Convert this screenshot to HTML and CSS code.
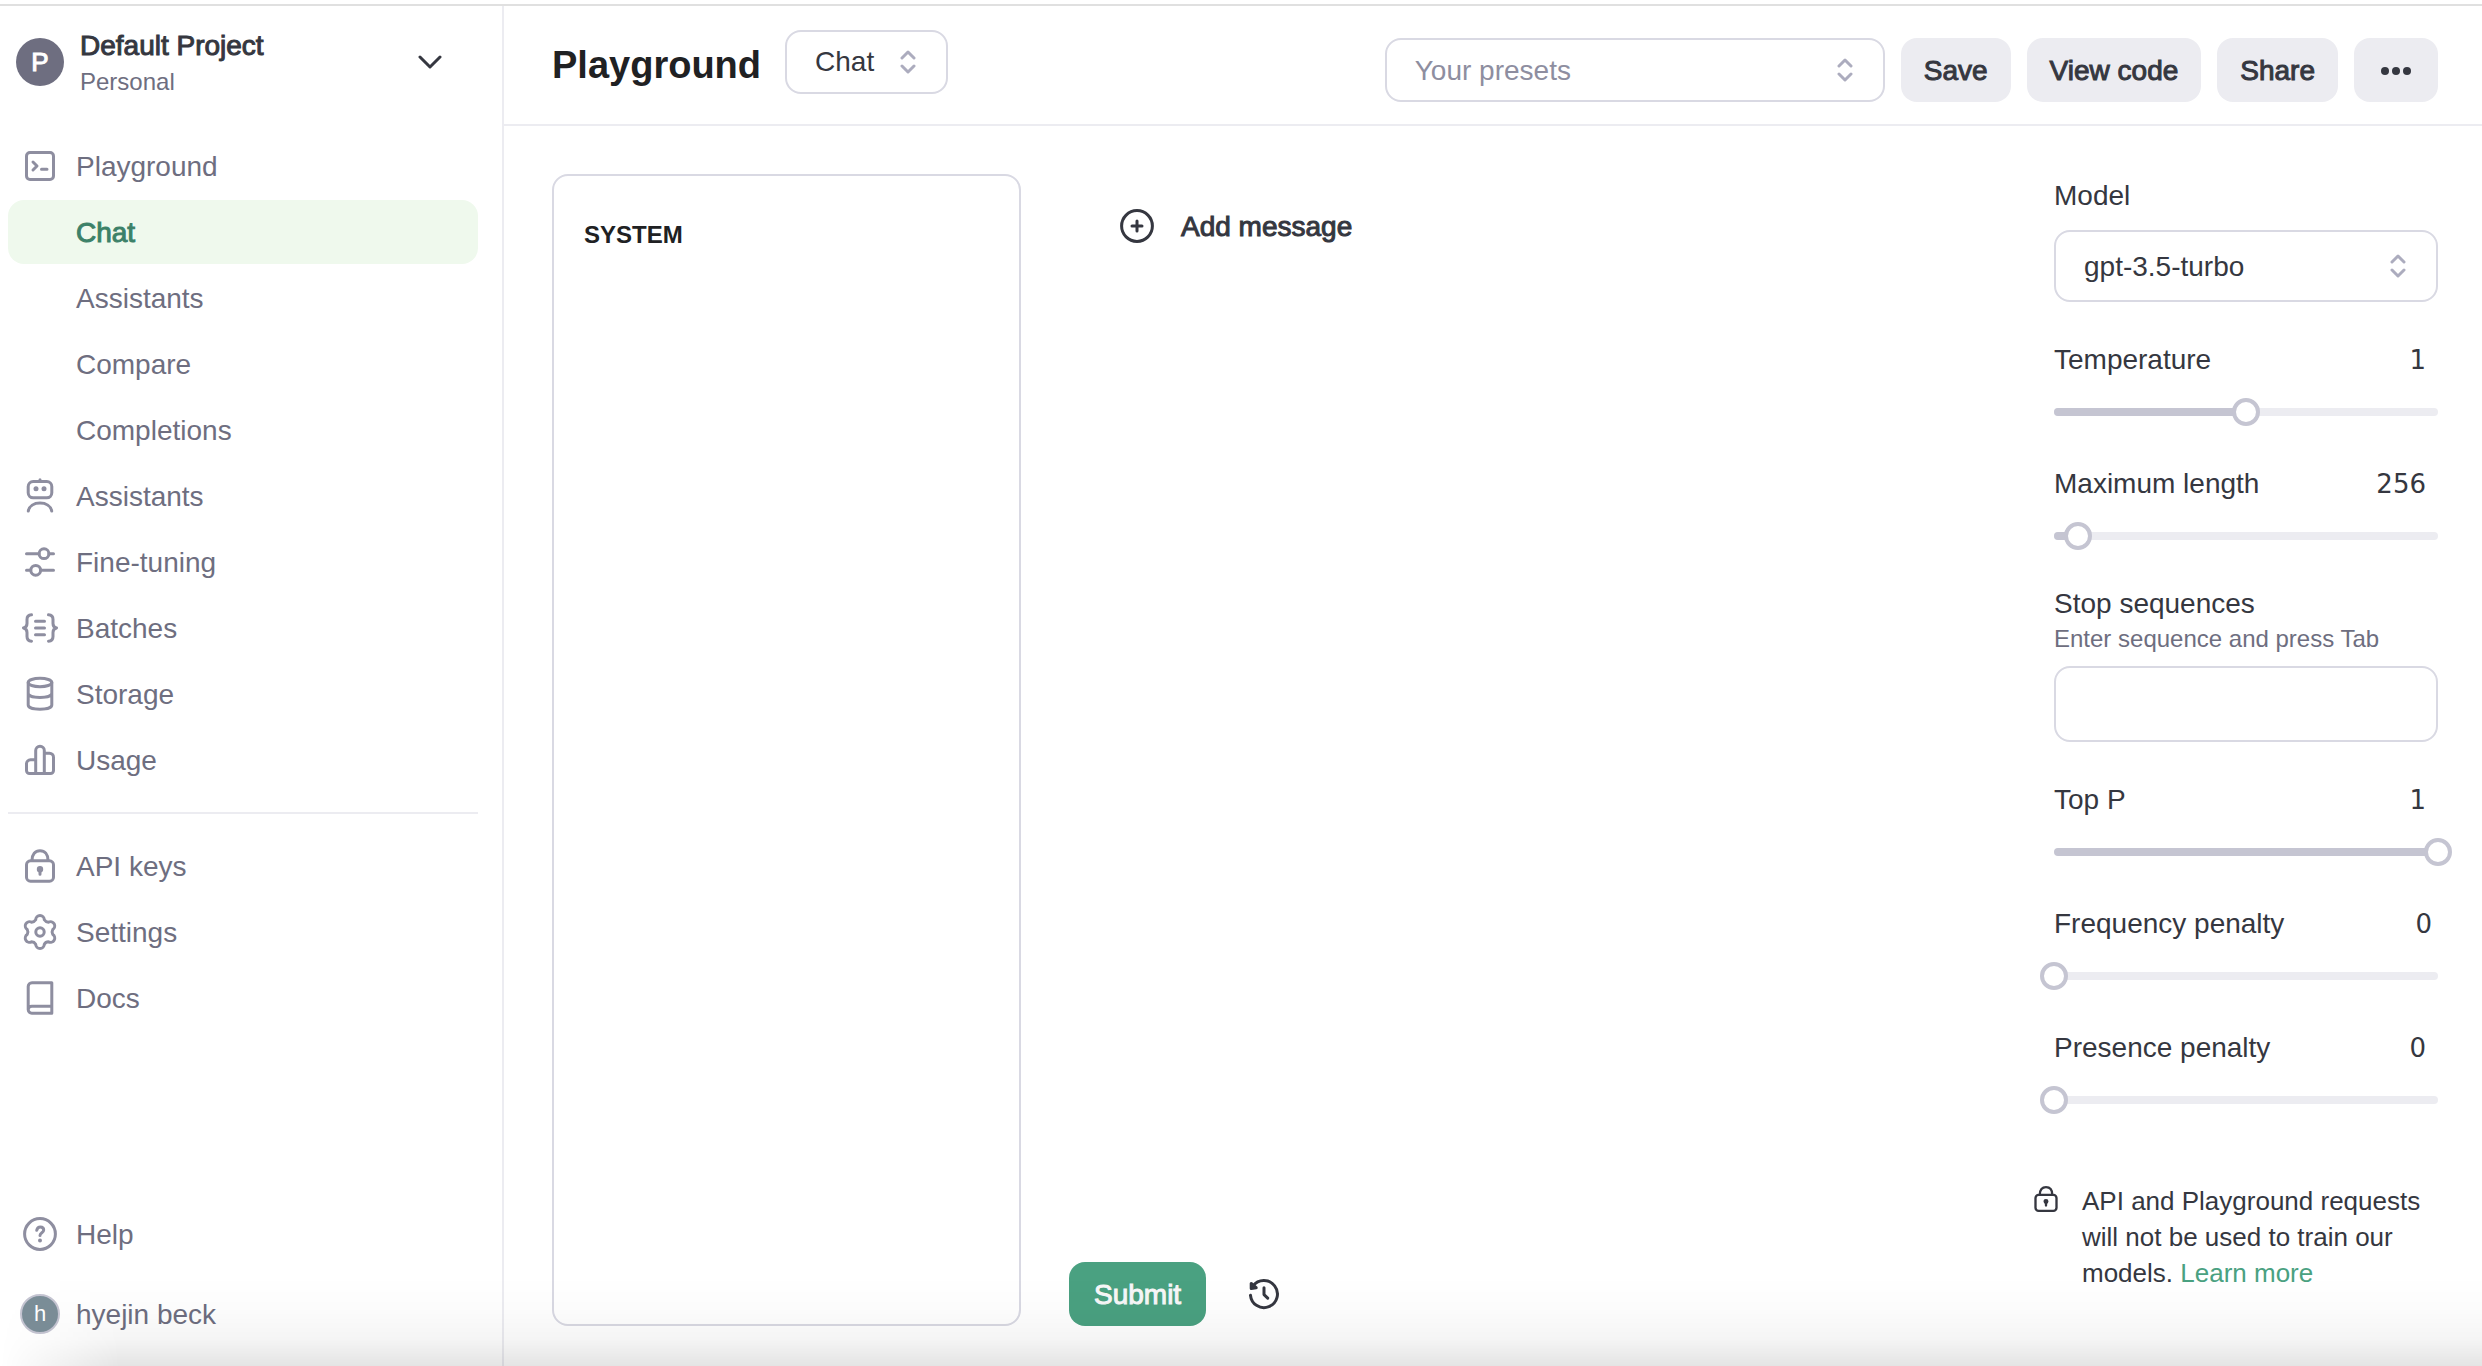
FILE: index.html
```html
<!DOCTYPE html>
<html lang="en">
<head>
<meta charset="utf-8">
<meta name="viewport" content="width=device-width, initial-scale=1">
<title>Playground</title>
<link rel="stylesheet" href="styles.css">
</head>
<body>
<svg class="defs" aria-hidden="true">
  <symbol id="lock" viewBox="0 0 36 36">
    <rect x="4.5" y="12.8" width="27" height="20.4" rx="4"/>
    <path d="M10 12.5C10 6.2 13.2 2.8 18 2.8s8 3.4 8 9.7M18 22v4.2"/>
    <circle cx="18" cy="21.3" r="1.7"/>
  </symbol>
  <symbol id="updown" viewBox="0 0 16 24">
    <path d="M2 8l6-6 6 6M2 16l6 6 6-6"/>
  </symbol>
</svg>
<div class="app">
  <aside class="sidebar">
    <button class="project" type="button">
      <span class="project-badge medium">P</span>
      <span class="project-text">
        <span class="project-name medium">Default Project</span>
        <span class="project-kind">Personal</span>
      </span>
      <svg class="project-chevron" viewBox="0 0 24 14"><path d="M2 2l10 10L22 2"/></svg>
    </button>
    <nav class="nav">
      <a class="nav-item" href="#"><svg class="icon" viewBox="0 0 36 36"><rect x="4.5" y="4.5" width="27" height="27" rx="3.5"/><path d="M11 14l4 4-4 4M19.5 21.3h5.5"/></svg>Playground</a>
      <a class="nav-item nav-sub active medium" href="#" aria-current="page">Chat</a>
      <a class="nav-item nav-sub" href="#">Assistants</a>
      <a class="nav-item nav-sub" href="#">Compare</a>
      <a class="nav-item nav-sub" href="#">Completions</a>
      <a class="nav-item" href="#"><svg class="icon" viewBox="0 0 36 36"><rect x="6.2" y="3.5" width="23.6" height="16.3" rx="5"/><path d="M18 3.5V1.8M6.3 33C7.2 28 12 25 18 25s10.8 3 11.7 8"/><circle class="dot" cx="14" cy="10.7" r="2.5"/><circle class="dot" cx="22" cy="10.7" r="2.5"/></svg>Assistants</a>
      <a class="nav-item" href="#"><svg class="icon" viewBox="0 0 36 36"><path d="M4.5 9.7H17M27 9.7h4.5M4.5 26.3H8.7M18.7 26.3h12.8"/><circle cx="22" cy="9.7" r="4.9"/><circle cx="13.7" cy="26.3" r="4.9"/></svg>Fine-tuning</a>
      <a class="nav-item" href="#"><svg class="icon" viewBox="0 0 36 36"><path d="M9.5 4.8C6.2 5 5 7 5 9.5v4C5 16 3.5 17.5 1.5 18 3.5 18.5 5 20 5 22.5v4c0 2.500 1.200 4.500 4.500 4.700M26.500 4.800C29.800 5 31 7 31 9.500v4c0 2.500 1.500 4 3.500 4.500-2 .5-3.500 2-3.500 4.500v4c0 2.500-1.200 4.500-4.500 4.700M13.500 11.300h9M13.500 18h9M13.500 24.700h9"/></svg>Batches</a>
      <a class="nav-item" href="#"><svg class="icon" viewBox="0 0 36 36"><ellipse cx="18" cy="6.5" rx="11.8" ry="4.2"/><path d="M6.2 6.5V29c0 2.6 5.3 4.2 11.8 4.2S29.8 31.6 29.8 29V6.5M6.2 17.3c0 2.6 5.3 4.2 11.8 4.2s11.8-1.6 11.8-4.2"/></svg>Storage</a>
      <a class="nav-item" href="#"><svg class="icon" viewBox="0 0 36 36"><path d="M13.7 31.5V8.5a4.3 4.3 0 0 1 8.6 0v23M13.7 17.8H8.5a4 4 0 0 0-4 4v6.7a3 3 0 0 0 3 3h21a3 3 0 0 0 3-3V15.2a4 4 0 0 0-4-4h-5.2"/></svg>Usage</a>
    </nav>
    <hr class="divider">
    <nav class="nav">
      <a class="nav-item" href="#"><svg class="icon"><use href="#lock"/></svg>API keys</a>
      <a class="nav-item" href="#"><svg class="icon" viewBox="-18 -18 36 36"><path d="M-4.3-12.2A4.3 4.3 0 0 1 4.3-12.2A5 5 0 0 0 8.42-9.82A4.3 4.3 0 0 1 12.72-2.38A5 5 0 0 0 12.72 2.38A4.3 4.3 0 0 1 8.42 9.82A5 5 0 0 0 4.3 12.2A4.3 4.3 0 0 1-4.3 12.2A5 5 0 0 0-8.42 9.82A4.3 4.3 0 0 1-12.72 2.38A5 5 0 0 0-12.72-2.38A4.3 4.3 0 0 1-8.42-9.82A5 5 0 0 0-4.3-12.2Z"/><circle r="4.2"/></svg>Settings</a>
      <a class="nav-item" href="#"><svg class="icon" viewBox="0 0 36 36"><path d="M29.8 33.2V2.8H10A3.8 3.8 0 0 0 6.2 6.6v23A3.6 3.6 0 0 0 9.8 33.2h20M29.8 26.3H9.8a3.6 3.6 0 0 0-3.6 3.5"/></svg>Docs</a>
    </nav>
    <nav class="nav nav-foot">
      <a class="nav-item" href="#"><svg class="icon" viewBox="0 0 36 36"><circle cx="18" cy="18" r="15.4"/><path d="M14.7 14.3c.6-2.3 2-3.3 3.6-3.3 2 0 3.4 1.3 3.4 3.1 0 2.7-3.7 2.7-3.7 5.4"/><circle class="dot" cx="18" cy="24.5" r="2"/></svg>Help</a>
      <a class="nav-item user" href="#"><span class="user-badge">h</span>hyejin beck</a>
    </nav>
  </aside>
  <div class="content">
    <header class="topbar">
      <div class="topbar-left">
        <h1 class="title">Playground</h1>
        <span class="select mode">
          <select aria-label="Mode"><option>Chat</option></select>
          <svg class="select-arrow"><use href="#updown"/></svg>
        </span>
      </div>
      <div class="topbar-right">
        <span class="select presets">
          <select aria-label="Your presets"><option>Your presets</option></select>
          <svg class="select-arrow"><use href="#updown"/></svg>
        </span>
        <button class="btn medium" type="button">Save</button>
        <button class="btn medium" type="button">View code</button>
        <button class="btn medium" type="button">Share</button>
        <button class="btn btn-more" type="button" aria-label="More"><svg viewBox="0 0 30 8"><circle cx="4" cy="4" r="4"/><circle cx="15" cy="4" r="4"/><circle cx="26" cy="4" r="4"/></svg></button>
      </div>
    </header>
    <main class="workspace">
      <section class="system">
        <label class="system-label" for="system">SYSTEM</label>
        <textarea id="system" class="system-input"></textarea>
      </section>
      <section class="chat">
        <button class="add-message medium" type="button"><svg class="icon" viewBox="0 0 36 36"><circle cx="18" cy="18" r="15.4"/><path d="M18 13v10M13 18h10"/></svg>Add message</button>
        <div class="chat-actions">
          <button class="btn btn-submit medium" type="button">Submit</button>
          <button class="btn-history" type="button" aria-label="History"><svg class="icon" viewBox="0 0 36 36"><path d="M4.5 19.3A13.5 13.5 0 1 0 7 10.2M18 11.8v6.8l3.7 3.5"/><path class="fill" d="M5.2 7.5v5l5-.8z"/></svg></button>
        </div>
      </section>
      <aside class="params">
        <div class="field">
          <label class="label" for="model">Model</label>
          <span class="select model">
            <select id="model"><option>gpt-3.5-turbo</option></select>
            <svg class="select-arrow"><use href="#updown"/></svg>
          </span>
        </div>
        <div class="field range-field">
          <div class="label-row"><label class="label" for="temp">Temperature</label><input class="value" aria-label="Temperature value" value="1"></div>
          <div class="slider"><div class="bar"><div class="fill-bar" style="width:50%"></div></div><input id="temp" type="range" min="0" max="2" step="0.01" value="1"></div>
        </div>
        <div class="field range-field">
          <div class="label-row"><label class="label" for="maxlen">Maximum length</label><input class="value" aria-label="Maximum length value" value="256"></div>
          <div class="slider"><div class="bar"><div class="fill-bar" style="width:6.25%"></div></div><input id="maxlen" type="range" min="0" max="4096" value="256"></div>
        </div>
        <div class="field stop-field">
          <label class="label" for="stop">Stop sequences</label>
          <p class="hint">Enter sequence and press Tab</p>
          <input id="stop" class="stop-input" type="text">
        </div>
        <div class="field range-field">
          <div class="label-row"><label class="label" for="topp">Top P</label><input class="value" aria-label="Top P value" value="1"></div>
          <div class="slider"><div class="bar"><div class="fill-bar" style="width:100%"></div></div><input id="topp" type="range" min="0" max="1" step="0.01" value="1"></div>
        </div>
        <div class="field range-field">
          <div class="label-row"><label class="label" for="freq">Frequency penalty</label><input class="value value-wide" aria-label="Frequency penalty value" value="0"></div>
          <div class="slider"><div class="bar"></div><input id="freq" type="range" min="0" max="2" step="0.01" value="0"></div>
        </div>
        <div class="field range-field">
          <div class="label-row"><label class="label" for="pres">Presence penalty</label><input class="value" aria-label="Presence penalty value" value="0"></div>
          <div class="slider"><div class="bar"></div><input id="pres" type="range" min="0" max="2" step="0.01" value="0"></div>
        </div>
        <div class="note">
          <svg class="icon note-icon"><use href="#lock"/></svg>
          <p class="note-text">API and Playground requests will not be used to train our models. <a href="#">Learn more</a></p>
        </div>
      </aside>
    </main>
  </div>
</div>
<div class="bottom-shade"></div>
</body>
</html>
```
FILE: styles.css
```css
:root {
  --ink: #353740;
  --muted: #6e6e80;
  --soft: #8e8ea0;
  --line: #ececf1;
  --edge: #d9d9e3;
  --knob: #c5c5d2;
  --green: #4aa181;
}
* { box-sizing: border-box; }
body {
  margin: 0;
  background: #fff;
  color: var(--ink);
  font: 28px/34px "Liberation Sans", Arial, sans-serif;
}
h1, p { margin: 0; }
a { text-decoration: none; color: var(--green); }
button, input, select, textarea { font: inherit; color: inherit; }
button { border: 0; background: none; padding: 0; cursor: pointer; }
.defs { position: absolute; width: 0; height: 0; }
.medium { -webkit-text-stroke: 1px currentColor; }

svg { fill: none; stroke: currentColor; stroke-linecap: round; stroke-linejoin: round; }
.icon { width: 36px; height: 36px; flex: none; stroke-width: 3px; }
.dot { fill: currentColor; stroke: none; }
.fill { fill: currentColor; }

.app {
  display: flex;
  min-height: 100vh;
  padding-top: 4px;
}
.app::before {
  content: "";
  position: absolute;
  left: 0;
  right: 0;
  top: 4px;
  height: 2px;
  background: #e0e0e0;
}

.sidebar {
  flex: none;
  width: 504px;
  border-right: 2px solid var(--line);
  padding: 26px 24px 20px 8px;
  display: flex;
  flex-direction: column;
}
.project {
  display: flex;
  align-items: center;
  height: 64px;
  padding: 0 36px 0 8px;
  margin-bottom: 40px;
  text-align: left;
}
.project-badge {
  width: 48px;
  height: 48px;
  border-radius: 50%;
  background: var(--muted);
  color: #fff;
  font-size: 26px;
  line-height: 48px;
  text-align: center;
}
.project-text { flex: 1; margin-left: 16px; padding-top: 6px; }
.project-name, .project-kind { display: block; }
.project-kind { color: var(--muted); font-size: 24px; line-height: 38px; }
.project-chevron { width: 24px; height: 14px; stroke-width: 3px; }

.nav { display: flex; flex-direction: column; gap: 2px; }
.nav-item {
  display: flex;
  align-items: center;
  gap: 18px;
  height: 64px;
  padding: 2px 0 0 14px;
  border-radius: 16px;
  color: var(--muted);
}
.nav-item .icon { color: var(--soft); margin-bottom: 2px; }
.nav-sub { padding-left: 68px; }
.nav-item.active { background: #eff9ed; color: #3c8168; }
.divider { width: 100%; height: 2px; border: 0; background: var(--line); margin: 20px 0; }
.nav-foot { margin-top: auto; gap: 16px; }
.user { padding-left: 12px; gap: 16px; }
.user-badge {
  width: 40px;
  height: 40px;
  margin-bottom: 2px;
  border: 2px solid var(--knob);
  border-radius: 50%;
  background: #7b8e98;
  color: #fff;
  font-size: 22px;
  line-height: 36px;
  text-align: center;
}

.content { flex: 1; min-width: 0; display: flex; flex-direction: column; }
.topbar {
  display: flex;
  justify-content: space-between;
  align-items: flex-start;
  min-height: 122px;
  padding: 26px 44px 0 48px;
  border-bottom: 2px solid var(--line);
}
.topbar-left { display: flex; gap: 24px; }
.topbar-right { display: flex; gap: 16px; padding-top: 8px; }
.title {
  color: #202123;
  font-size: 38px;
  font-weight: 700;
  line-height: 70px;
}

.select { display: grid; align-items: center; align-self: start; }
.field .select { align-self: stretch; }
.select > * { grid-area: 1 / 1; }
.select select {
  width: 100%;
  height: 64px;
  padding: 0 28px;
  border: 2px solid var(--edge);
  border-radius: 16px;
  background: #fff;
  appearance: none;
}
.select-arrow {
  justify-self: end;
  width: 16px;
  height: 24px;
  margin-right: 32px;
  color: #acacbe;
  stroke-width: 3px;
  pointer-events: none;
}
.mode { width: 163px; }
.presets { width: 500px; color: var(--soft); }
.presets select { padding-top: 2px; }
.model select { height: 72px; padding-top: 2px; }

.btn {
  height: 64px;
  padding: 2px 23px 0;
  border-radius: 16px;
  background: var(--line);
  white-space: nowrap;
}
.btn-more { width: 84px; }
.btn-more svg { display: block; margin: 0 auto; width: 30px; height: 8px; fill: currentColor; stroke: none; }

.workspace {
  flex: 1;
  display: grid;
  grid-template-columns: 469px minmax(0, 1fr) 384px;
  gap: 48px;
  padding: 48px 44px 40px 48px;
}
.system {
  display: flex;
  flex-direction: column;
  border: 2px solid var(--edge);
  border-radius: 16px;
  padding: 42px 30px 30px;
}
.system-label { color: #202123; font-size: 24px; font-weight: 700; line-height: 34px; }
.system-input { flex: 1; margin-top: 16px; border: 0; padding: 0; resize: none; background: none; outline: 0; }
.chat { display: flex; flex-direction: column; justify-content: space-between; align-items: flex-start; }
.add-message { display: flex; align-items: center; gap: 26px; height: 64px; margin: 20px 0 0 50px; padding-top: 2px; }
.add-message .icon { margin-bottom: 2px; }
.chat-actions { display: flex; align-items: center; gap: 40px; }
.btn-submit { background: var(--green); color: #f7f7f8; padding: 2px 25px 0; }
.btn-history { height: 36px; }

.params { padding-top: 4px; display: flex; flex-direction: column; gap: 40px; }
.field { display: flex; flex-direction: column; }
.label { line-height: 36px; }
.model { margin-top: 16px; }
.range-field { gap: 20px; }
.label-row { display: flex; justify-content: space-between; }
.value {
  width: 96px;
  height: 36px;
  border: 0;
  padding: 0 12px 0 0;
  background: none;
  font: 26px/36px "DejaVu Sans", sans-serif;
  text-align: right;
}
.value-wide { padding-right: 6px; }
.slider { display: grid; align-items: center; height: 28px; }
.slider > * { grid-area: 1 / 1; }
.bar { height: 8px; border-radius: 4px; background: var(--line); overflow: hidden; }
.fill-bar { height: 100%; background: var(--knob); }
.slider input {
  width: calc(100% + 28px);
  height: 28px;
  margin: 0 -14px;
  background: none;
  appearance: none;
}
.slider input::-webkit-slider-thumb {
  appearance: none;
  width: 28px;
  height: 28px;
  border: 4px solid var(--knob);
  border-radius: 50%;
  background: #fff;
}
.stop-field { margin-top: -4px; }
.hint { margin-top: 2px; color: var(--muted); font-size: 24px; line-height: 30px; }
.stop-input { height: 76px; margin-top: 12px; padding: 0 28px; border: 2px solid var(--edge); border-radius: 16px; background: #fff; }
.note { display: flex; gap: 22px; margin: 29px 0 0 -22px; font-size: 26px; line-height: 36px; }
.note-icon { width: 28px; height: 32px; }
.note-text { flex: 1; }

.bottom-shade {
  position: fixed;
  left: 0;
  right: 0;
  bottom: 0;
  height: 90px;
  pointer-events: none;
  background: linear-gradient(to bottom, rgba(0,0,0,0), rgba(0,0,0,.012) 35%, rgba(0,0,0,.04) 70%, rgba(0,0,0,.105));
  -webkit-mask-image: linear-gradient(to right, transparent, #000 120px);
  mask-image: linear-gradient(to right, transparent, #000 120px);
}
```
